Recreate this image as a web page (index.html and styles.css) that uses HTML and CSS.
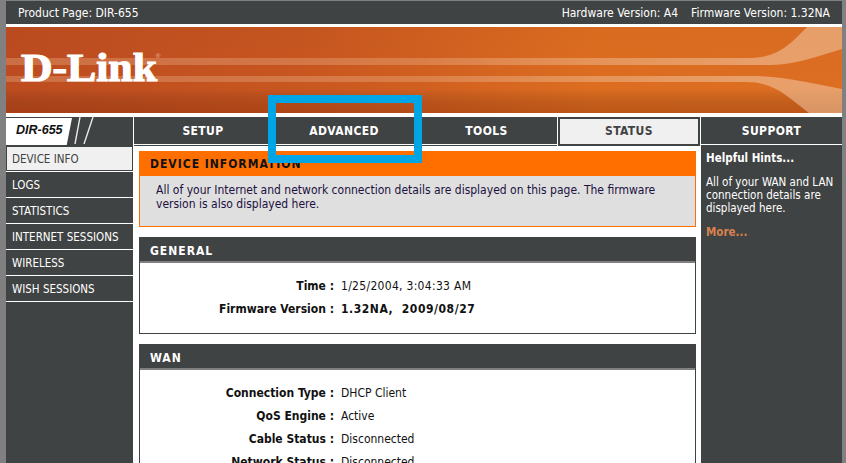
FILE: index.html
```html
<!DOCTYPE html>
<html lang="en">
<head>
<meta charset="utf-8">
<title>D-Link DIR-655</title>
<link rel="stylesheet" href="styles.css">
</head>
<body>
<div class="page">
  <header class="topbar">
    <span>Product Page: DIR-655</span>
    <span class="versions"><span>Hardware Version: A4</span><span>Firmware Version: 1.32NA</span></span>
  </header>
  <div class="banner">
    <svg class="banner-art" viewBox="0 0 836 86" preserveAspectRatio="none" aria-hidden="true">
      <defs>
        <linearGradient id="bg" x1="0" x2="1" y1="0" y2="0">
          <stop offset="0" stop-color="#bd4c20"/>
          <stop offset="0.35" stop-color="#c85620"/>
          <stop offset="0.7" stop-color="#dd6d20"/>
          <stop offset="1" stop-color="#dc6e22"/>
        </linearGradient>
        <linearGradient id="shade" x1="0" x2="0" y1="0" y2="1">
          <stop offset="0" stop-color="#000" stop-opacity="0.02"/>
          <stop offset="0.72" stop-color="#000" stop-opacity="0"/>
          <stop offset="1" stop-color="#7a2000" stop-opacity="0.3"/>
        </linearGradient>
        <linearGradient id="stripe" x1="0" x2="1" y1="0" y2="0">
          <stop offset="0" stop-color="#f3c8a4" stop-opacity="0.28"/>
          <stop offset="0.5" stop-color="#f3c8a4" stop-opacity="0.3"/>
          <stop offset="0.9" stop-color="#f3c8a4" stop-opacity="0.55"/>
          <stop offset="1" stop-color="#f3c8a4" stop-opacity="0.55"/>
        </linearGradient>
      </defs>
      <rect width="836" height="86" fill="url(#bg)"/>
      <rect width="836" height="86" fill="url(#shade)"/>
      <path d="M0 31H745C765 31 778 22 788 13L801 0H836V22C815 28 790 38 765 38H0Z" fill="url(#stripe)"/>
      <path d="M0 49H745C775 49 805 56 836 62V86H803L785 72C772 62 760 55 740 55H0Z" fill="url(#stripe)"/>
    </svg>
    <div class="logo">D-Link<span class="reg">®</span></div>
  </div>
  <nav class="tabs">
    <div class="model">
      <span class="model-name">DIR-655</span>
      <svg class="slashes" viewBox="0 0 30 27" aria-hidden="true">
        <path d="M8 0L3 27M21 0L12 27" stroke="#e8e8e8" stroke-width="1.4" fill="none"/>
      </svg>
    </div>
    <a class="tab">SETUP</a>
    <a class="tab">ADVANCED</a>
    <a class="tab">TOOLS</a>
    <a class="tab active">STATUS</a>
    <a class="tab">SUPPORT</a>
  </nav>
  <div class="main">
    <aside class="side">
      <a class="side-item active">DEVICE INFO</a>
      <a class="side-item">LOGS</a>
      <a class="side-item">STATISTICS</a>
      <a class="side-item">INTERNET SESSIONS</a>
      <a class="side-item">WIRELESS</a>
      <a class="side-item">WISH SESSIONS</a>
    </aside>
    <main class="content">
      <section class="info">
        <h1>DEVICE INFORMATION</h1>
        <p>All of your Internet and network connection details are displayed on this page. The firmware version is also displayed here.</p>
      </section>
      <section class="box">
        <h2>GENERAL</h2>
        <dl class="rows rows-general">
          <div class="row"><dt>Time :</dt><dd class="num">1/25/2004, 3:04:33 AM</dd></div>
          <div class="row strong"><dt>Firmware Version :</dt><dd>1.32NA,&nbsp; 2009/08/27</dd></div>
        </dl>
      </section>
      <section class="box">
        <h2>WAN</h2>
        <dl class="rows">
          <div class="row"><dt>Connection Type :</dt><dd>DHCP Client</dd></div>
          <div class="row"><dt>QoS Engine :</dt><dd>Active</dd></div>
          <div class="row"><dt>Cable Status :</dt><dd>Disconnected</dd></div>
          <div class="row"><dt>Network Status :</dt><dd>Disconnected</dd></div>
        </dl>
      </section>
    </main>
    <aside class="hints">
      <h3>Helpful Hints...</h3>
      <p>All of your WAN and LAN connection details are displayed here.</p>
      <a class="more">More...</a>
    </aside>
  </div>
</div>
<div class="callout"></div>
</body>
</html>
```
FILE: styles.css
```css
html, body { margin: 0; height: 463px; overflow: hidden; background: #808080; }
body { font-family: "DejaVu Sans Condensed", "DejaVu Sans", sans-serif; font-size: 12px; color: #111; }
.page { margin: 1px 4px 0 6px; background: #fff; height: 462px; overflow: hidden; }
.topbar { height: 23px; background: #404343; color: #fff; display: flex; justify-content: space-between; align-items: center; padding: 0 12px 0 12px; }
.versions { display: flex; gap: 13px; }
.banner { margin-top: 3px; height: 86px; position: relative; }
.banner-art { display: block; width: 100%; height: 86px; }
.logo { position: absolute; left: 15px; top: 19px; font-family: "Liberation Serif", serif; font-weight: 700; font-size: 39px; line-height: 44px; color: #fff; -webkit-text-stroke: 1.2px #fff; transform: scaleX(1.12); transform-origin: 0 50%; }
.reg { position: absolute; left: 120px; top: 6px; font: 6px/8px "Liberation Sans", sans-serif; color: #e7b9a0; -webkit-text-stroke: 0; }
.tabs { margin-top: 4px; height: 27px; display: grid; grid-template-columns: 127px 139px 143px 142px 143px 142px; }
.model { background: #404343; display: flex; align-items: stretch; position: relative; }
.model-name { width: 56px; margin: 1px 0; background: #fff; clip-path: polygon(0 0, 100% 0, 92% 100%, 0 100%); font: italic 700 12.5px/25px "Liberation Sans", sans-serif; color: #111; padding-left: 10px; }
.slashes { width: 30px; height: 27px; flex: none; }
.tab { background: #404343; color: #fff; font-weight: 700; font-size: 12px; letter-spacing: 0.4px; text-align: center; line-height: 29px; margin-left: 1px; box-shadow: inset 0 -1px #404343, inset 0 -2px #fff; }
.tab.active { background: #f0f0f0; color: #404343; border: 2px solid #404343; line-height: 25px; box-shadow: none; }
.main { display: grid; grid-template-columns: 128px 567px 141px; margin-top: 2px; height: 322px; }
.side { background: #404343; display: flex; flex-direction: column; margin-right: 1px; }
.side-item { height: 25px; line-height: 26px; padding-left: 6px; background: #404343; color: #fff; font-size: 11.5px; border-bottom: 1px solid #fff; }
.side-item.active { background: #f0f0f0; color: #404343; border: 1px solid #404343; height: 23px; padding-left: 5px; line-height: 25px; box-shadow: 0 1px #fff; margin-bottom: 1px; }
.content { padding: 5px 5px 0 5px; background: #fff; }
.info { border: 1px solid #ff6f00; background: #dfdfdf; margin-bottom: 10px; }
h1 { margin: 0; height: 24px; background: #ff6f00; color: #111; font-size: 12px; font-weight: 700; letter-spacing: 1px; line-height: 25px; padding-left: 10px; }
.info p { margin: 0; padding: 7px 16px 15px; line-height: 14px; color: #201040; }
.box { border: 1px solid #404343; margin-bottom: 10px; }
h2 { margin: 0; height: 23px; background: #404343; color: #fff; border-bottom: 2px solid #808080; font-size: 12px; font-weight: 700; letter-spacing: 1px; line-height: 26px; padding-left: 10px; }
.rows { margin: 0; padding: 12px 0 14px; }
.rows-general { height: 46px; padding-bottom: 12px; }
.row { display: flex; height: 23px; line-height: 23px; }
dt { width: 194px; text-align: right; font-weight: 700; }
dd { margin: 0 0 0 7px; }
.num { letter-spacing: 0.3px; }
.strong dd { font-weight: 700; letter-spacing: 0.55px; }
.hints { background: #404343; color: #fff; padding: 6px 5px; font-size: 11.5px; line-height: 13px; }
.hints h3 { margin: 0 0 11px; font-size: 11.5px; font-weight: 700; line-height: 13px; }
.hints p { margin: 0 0 11px; }
.more { color: #d9824d; font-weight: 700; }
.callout { position: absolute; left: 268px; top: 95px; width: 138px; height: 52px; border: 8px solid #00a5e6; }
```
